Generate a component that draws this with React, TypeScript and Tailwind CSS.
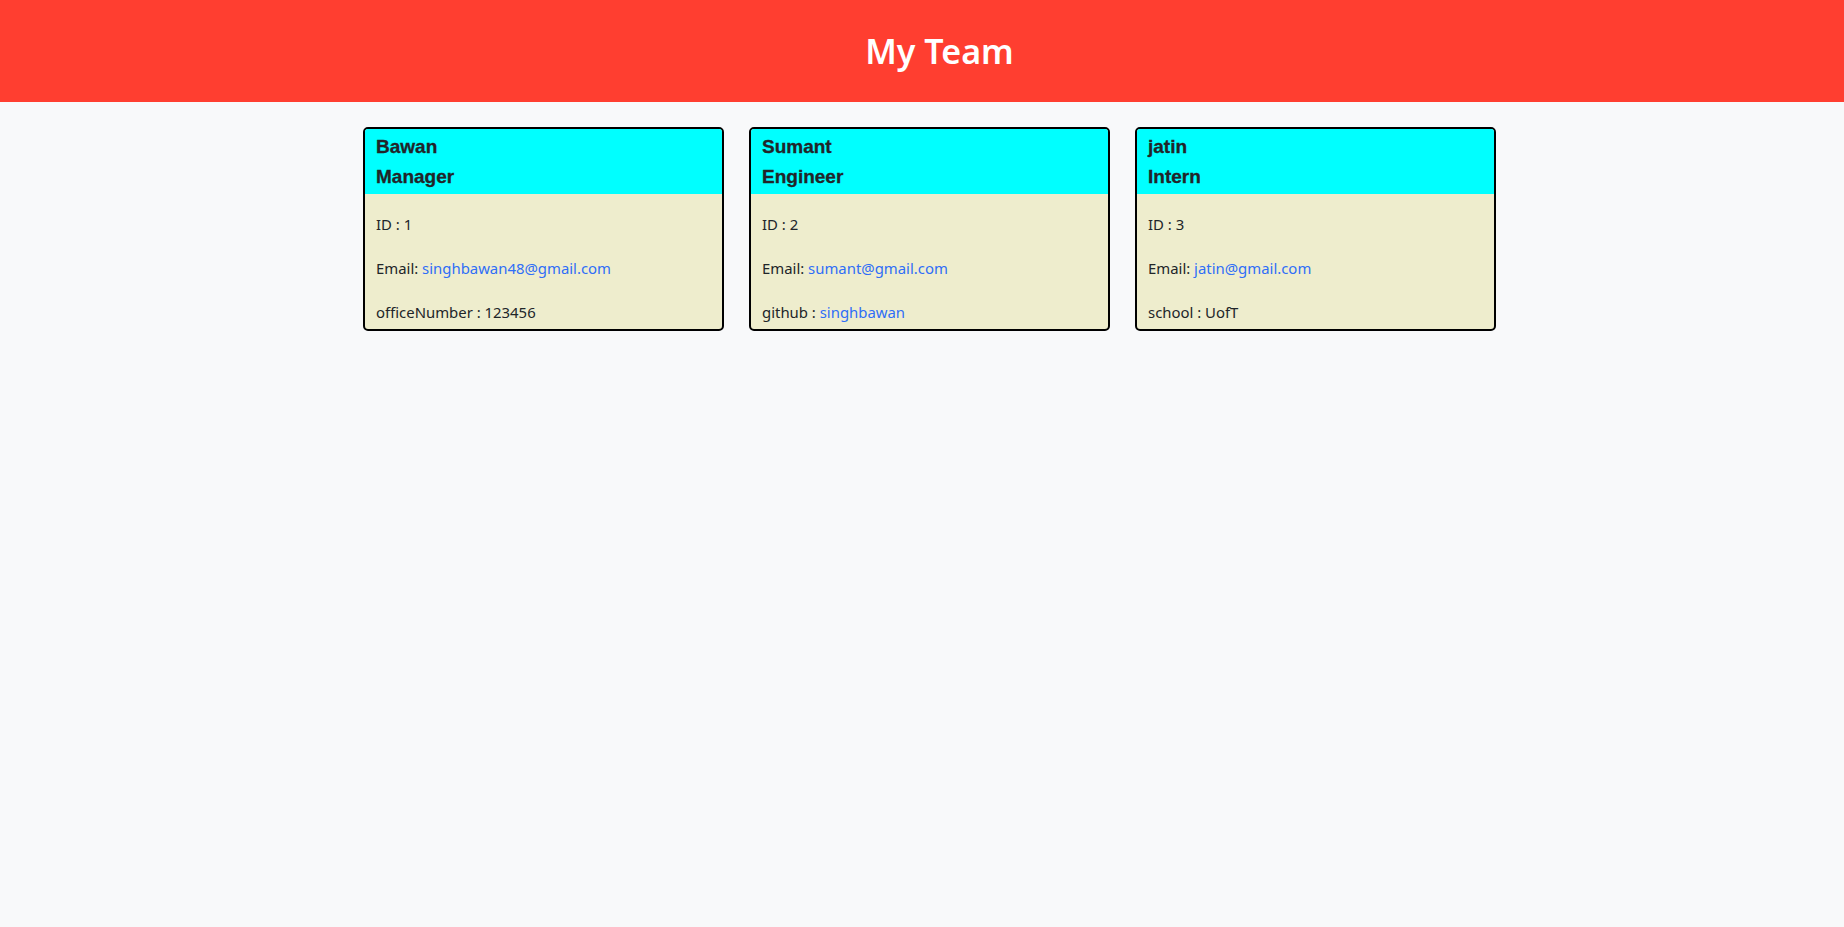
import React from "react";

type Member = {
  name: string;
  role: string;
  id: number;
  email: string;
  extraLabel: string;
  extraValue: string;
  extraLink?: boolean;
};

const members: Member[] = [
  { name: "Bawan", role: "Manager", id: 1, email: "singhbawan48@gmail.com", extraLabel: "officeNumber", extraValue: "123456" },
  { name: "Sumant", role: "Engineer", id: 2, email: "sumant@gmail.com", extraLabel: "github", extraValue: "singhbawan", extraLink: true },
  { name: "jatin", role: "Intern", id: 3, email: "jatin@gmail.com", extraLabel: "school", extraValue: "UofT" },
];

function Card({ m }: { m: Member }) {
  return (
    <div className="w-[361px] border-2 border-black rounded-[5px] overflow-hidden bg-[#eeedcd]">
      <div className="bg-[#00ffff] px-[11px] pt-[3px] pb-[2px] text-[#212529] font-bold text-[19px] leading-[30px] [-webkit-text-stroke:0.3px_#212529] [font-family:'Liberation_Sans',Arial,sans-serif]">
        <div>{m.name}</div>
        <div>{m.role}</div>
      </div>
      <div className="px-[11px] pt-[18px] pb-[5px] flex flex-col gap-[20px] text-[14.9px] leading-[24px] text-[#212529] [font-family:'Noto_Sans',sans-serif]">
        <div>ID : {m.id}</div>
        <div>
          Email: <a className="text-[#2f6ef7]" href="#">{m.email}</a>
        </div>
        <div>
          {m.extraLabel} :{" "}
          {m.extraLink ? <a className="text-[#2f6ef7]" href="#">{m.extraValue}</a> : m.extraValue}
        </div>
      </div>
    </div>
  );
}

export default function App() {
  return (
    <div className="min-h-[927px] bg-[#f8f9fa] [font-family:'Noto_Sans',sans-serif]">
      <header className="h-[102px] bg-[#ff3e30] flex items-center justify-center pl-[35px]">
        <h1 className="text-white font-semibold text-[34px] leading-none [font-family:'Noto_Sans',sans-serif]">My Team</h1>
      </header>
      <main className="mx-auto w-[1150px] pl-[16px] pt-[25px] flex gap-[25px]">
        {members.map((m) => (
          <Card key={m.id} m={m} />
        ))}
      </main>
    </div>
  );
}
